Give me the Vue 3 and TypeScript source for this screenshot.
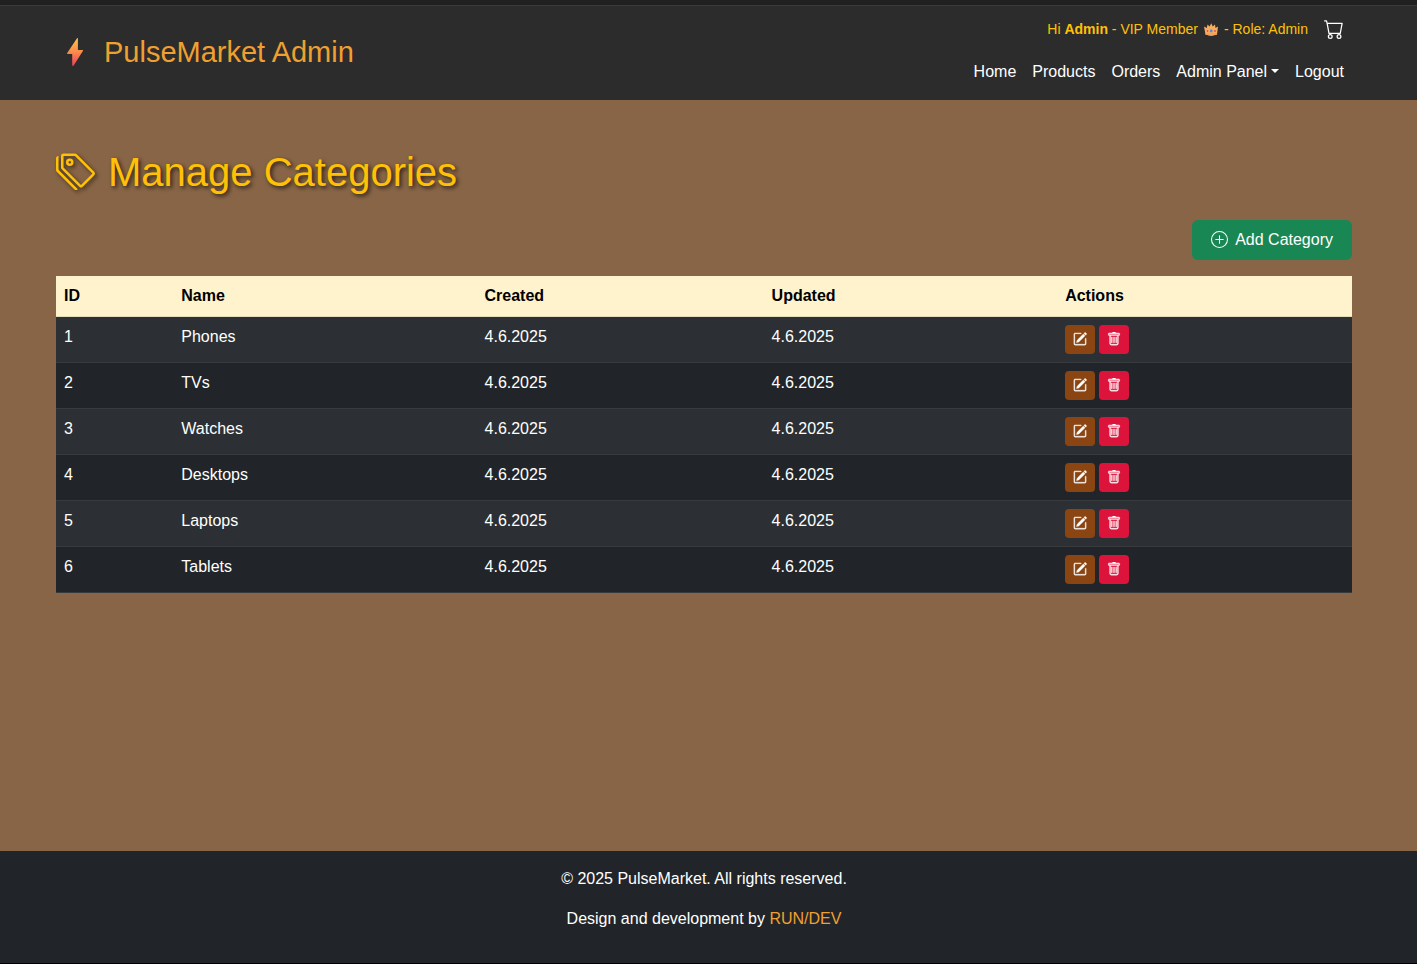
<script setup lang="ts">
interface Category {
  id: number
  name: string
  created: string
  updated: string
}

const names: string[] = ['Phones', 'TVs', 'Watches', 'Desktops', 'Laptops', 'Tablets']

const categories: Category[] = names.map((name, index) => ({
  id: index + 1,
  name,
  created: '4.6.2025',
  updated: '4.6.2025',
}))
</script>

<template>
  <div class="page">
    <header class="header">
      <div class="container header-row">
        <a class="brand" href="#">
          <svg class="bolt" viewBox="0 0 16 28" aria-hidden="true">
            <defs>
              <linearGradient id="bolt-fill" x1="0" y1="0" x2="0" y2="1">
                <stop offset="0" stop-color="#ffc24a" />
                <stop offset="0.5" stop-color="#fb8a4c" />
                <stop offset="1" stop-color="#e8405c" />
              </linearGradient>
            </defs>
            <path d="M10 0.3Q10.9-.4 10.9.8V12h4.6q.9.1.4 1L6.700 27.500Q5.200 28.600 5.200 27V16H.6Q-.3 15.800.2 15Z" fill="url(#bolt-fill)" />
          </svg>
          <span>PulseMarket Admin</span>
        </a>
        <div class="header-side">
          <div class="account">
            <span class="greeting">
              <span>Hi <strong>Admin</strong> - VIP Member</span>
              <svg class="crown" viewBox="0 0 14 13" aria-hidden="true">
                <path d="M0 3.500 2.800 5 3.500 1.500 5.600 3.500 7.200.3 8.800 3.500 11 1.500 11.500 5 14 3.500 13 11.500Q7 13.800 1.500 11.500Z" fill="#f8ad5d" />
                <path d="M1.500 9.500Q7 11.500 13 9.500L13 11.500Q7 13.800 1.500 11.500Z" fill="#f5a05a" />
                <circle cx="7.200" cy="8" r="1.400" fill="#4a8bea" />
                <circle cx="3.500" cy="8" r="0.900" fill="#e9475d" />
                <circle cx="11" cy="8" r="0.900" fill="#e9475d" />
              </svg>
              <span>- Role: Admin</span>
            </span>
            <a class="cart" href="#" aria-label="Cart">
              <svg viewBox="0 0 16 16" aria-hidden="true">
                <path d="M0 1.500A.5.5 0 0 1 .5 1H2a.5.5 0 0 1 .485.379L2.890 3H14.500a.5.5 0 0 1 .491.592l-1.500 8A.5.5 0 0 1 13 12H4a.5.5 0 0 1-.491-.408L2.010 3.607 1.610 2H.5a.5.5 0 0 1-.5-.5M3.102 4l1.313 7h8.170l1.313-7zM5 12a2 2 0 1 0 0 4 2 2 0 0 0 0-4m7 0a2 2 0 1 0 0 4 2 2 0 0 0 0-4m-7 1a1 1 0 1 1 0 2 1 1 0 0 1 0-2m7 0a1 1 0 1 1 0 2 1 1 0 0 1 0-2" />
              </svg>
            </a>
          </div>
          <nav class="nav">
            <a href="#">Home</a>
            <a href="#">Products</a>
            <a href="#">Orders</a>
            <a class="dropdown" href="#">Admin Panel</a>
            <a href="#">Logout</a>
          </nav>
        </div>
      </div>
    </header>

    <main class="main">
      <div class="container">
        <h1 class="title">
          <svg class="tags" viewBox="0 0 16 16" aria-hidden="true">
            <path d="M3 2v4.586l7 7L14.586 9l-7-7zM2 2a1 1 0 0 1 1-1h4.586a1 1 0 0 1 .707.293l7 7a1 1 0 0 1 0 1.414l-4.586 4.586a1 1 0 0 1-1.414 0l-7-7A1 1 0 0 1 2 6.586z" />
            <path d="M5.500 5a.5.5 0 1 1 0-1 .5.5 0 0 1 0 1m0 1a1.500 1.500 0 1 0 0-3 1.500 1.500 0 0 0 0 3M1 7.086a1 1 0 0 0 .293.707L8.750 15.250l-.043.043a1 1 0 0 1-1.414 0l-7-7A1 1 0 0 1 0 7.586V3a1 1 0 0 1 1-1z" />
          </svg>
          <span>Manage Categories</span>
        </h1>
        <div class="toolbar">
          <button class="add" type="button">
            <svg viewBox="0 0 16 16" aria-hidden="true">
              <path d="M8 15A7 7 0 1 1 8 1a7 7 0 0 1 0 14m0 1A8 8 0 1 0 8 0a8 8 0 0 0 0 16" />
              <path d="M8 4a.5.5 0 0 1 .5.5v3h3a.5.5 0 0 1 0 1h-3v3a.5.5 0 0 1-1 0v-3h-3a.5.5 0 0 1 0-1h3v-3A.5.5 0 0 1 8 4" />
            </svg>
            <span>Add Category</span>
          </button>
        </div>
        <table class="table">
          <thead>
            <tr>
              <th class="col-id" scope="col">ID</th>
              <th class="col-name" scope="col">Name</th>
              <th class="col-created" scope="col">Created</th>
              <th class="col-updated" scope="col">Updated</th>
              <th scope="col">Actions</th>
            </tr>
          </thead>
          <tbody>
            <tr v-for="category in categories" :key="category.id">
              <td>{{ category.id }}</td>
              <td>{{ category.name }}</td>
              <td>{{ category.created }}</td>
              <td>{{ category.updated }}</td>
              <td>
                <div class="actions">
                  <button class="action edit" type="button" :aria-label="`Edit ${category.name}`">
                    <svg viewBox="0 0 16 16" aria-hidden="true">
                      <path d="M15.502 1.940a.5.5 0 0 1 0 .706L14.459 3.690l-2-2L13.502.646a.5.5 0 0 1 .707 0l1.293 1.293zm-1.750 2.456-2-2L4.939 9.210a.5.5 0 0 0-.121.196l-.805 2.414a.25.25 0 0 0 .316.316l2.414-.805a.5.5 0 0 0 .196-.12z" />
                      <path fill-rule="evenodd" d="M1 13.500A1.500 1.500 0 0 0 2.500 15h11a1.500 1.500 0 0 0 1.500-1.500v-6a.5.5 0 0 0-1 0v6a.5.5 0 0 1-.5.5h-11a.5.5 0 0 1-.5-.5v-11a.5.5 0 0 1 .5-.5H9a.5.5 0 0 0 0-1H2.500A1.500 1.500 0 0 0 1 2.500z" />
                    </svg>
                  </button>
                  <button class="action delete" type="button" :aria-label="`Delete ${category.name}`">
                    <svg viewBox="0 0 16 16" aria-hidden="true">
                      <path d="M5.500 5.500A.5.5 0 0 1 6 6v6a.5.5 0 0 1-1 0V6a.5.5 0 0 1 .5-.5m2.500 0a.5.5 0 0 1 .5.5v6a.5.5 0 0 1-1 0V6a.5.5 0 0 1 .5-.5m3 .5a.5.5 0 0 0-1 0v6a.5.5 0 0 0 1 0z" />
                      <path d="M14.500 3a1 1 0 0 1-1 1H13v9a2 2 0 0 1-2 2H5a2 2 0 0 1-2-2V4h-.5a1 1 0 0 1-1-1V2a1 1 0 0 1 1-1H6a1 1 0 0 1 1-1h2a1 1 0 0 1 1 1h3.500a1 1 0 0 1 1 1zM4.118 4 4 4.059V13a1 1 0 0 0 1 1h6a1 1 0 0 0 1-1V4.059L11.882 4zM2.500 3h11V2h-11z" />
                    </svg>
                  </button>
                </div>
              </td>
            </tr>
          </tbody>
        </table>
      </div>
    </main>

    <footer class="footer">
      <p>© 2025 PulseMarket. All rights reserved.</p>
      <p>Design and development by <a href="#">RUN/DEV</a></p>
    </footer>
  </div>
</template>

<style>
body {
  margin: 0;
}
</style>

<style scoped>
.page {
  display: flex;
  flex-direction: column;
  min-height: 100vh;
  box-sizing: border-box;
  border-bottom: 1px solid #000;
  background: #886546;
  color: #fff;
  font-family: "Liberation Sans", Arial, sans-serif;
  font-size: 16px;
  line-height: 24px;
}

.page * {
  box-sizing: border-box;
}

.page a {
  color: inherit;
  text-decoration: none;
}

.page svg {
  display: block;
  flex: none;
  fill: currentColor;
}

.container {
  width: 100%;
  max-width: 1296px;
  margin: 0 auto;
}

.header {
  padding-right: 9px;
  border-top: 5px solid #202020;
  background: #2c2c2c;
  box-shadow: inset 0 1px #3b3b3b;
}

.header-row {
  display: flex;
  justify-content: space-between;
  align-items: center;
  padding: 9px 8px 8px;
}

.brand {
  display: flex;
  align-items: center;
  gap: 21px;
  padding: 0 0 2px 3px;
  font-size: 29px;
  line-height: 36px;
}

.page .brand {
  color: #f0a030;
}

.bolt {
  width: 16px;
  height: 28px;
}

.header-side {
  display: flex;
  flex-direction: column;
  align-items: flex-end;
  gap: 8px;
}

.account {
  display: flex;
  align-items: center;
  gap: 16px;
  height: 30px;
}

.greeting {
  display: flex;
  align-items: center;
  gap: 6px;
  color: #ffc107;
  font-size: 14px;
  line-height: 20px;
}

.crown {
  width: 14px;
  height: 13px;
}

.cart svg {
  width: 20px;
  height: 20px;
}

.nav {
  display: flex;
  gap: 16px;
}

.nav a {
  padding: 8px 0;
}

.dropdown::after {
  content: "";
  display: inline-block;
  margin-left: 4px;
  vertical-align: 4px;
  border-top: 4px solid;
  border-right: 4px solid transparent;
  border-left: 4px solid transparent;
}

.main {
  flex: 1;
  padding: 48px 9px 48px 0;
}

.title {
  display: flex;
  align-items: center;
  gap: 12px;
  margin: 0 0 24px;
  color: #ffc107;
  font-size: 40px;
  font-weight: 400;
  line-height: 48px;
  text-shadow: 2px 2px 4px rgba(0, 0, 0, 0.7);
}

.tags {
  width: 40px;
  height: 40px;
  margin-bottom: 2px;
  filter: drop-shadow(2px 2px 2px rgba(0, 0, 0, 0.6));
}

.toolbar {
  display: flex;
  justify-content: flex-end;
  margin-bottom: 16px;
}

.add {
  display: flex;
  align-items: center;
  gap: 7px;
  padding: 8px 19px;
  border: 0;
  border-radius: 6px;
  background: #198754;
  color: #fff;
  font: inherit;
}

.add svg {
  width: 17px;
  height: 17px;
  margin-bottom: 2px;
}

.table {
  width: 100%;
  table-layout: fixed;
  border-collapse: separate;
  border-spacing: 0;
}

.table th,
.table td {
  padding: 8px;
  border-bottom: 1px solid #373b3e;
  text-align: left;
  vertical-align: top;
}

.table th {
  border-color: #e6dbb9;
  background: #fff3cd;
  color: #000;
}

.table td {
  background: #212529;
}

.table tbody tr:nth-child(odd) td {
  background: #2c3034;
}

.col-id {
  width: 9.05%;
}

.col-name {
  width: 23.4%;
}

.col-created {
  width: 22.15%;
}

.col-updated {
  width: 22.65%;
}

.actions {
  display: flex;
  gap: 4px;
}

.action {
  padding: 7px 8px 8px;
  border: 0;
  border-radius: 4px;
  color: #fff;
}

.action svg {
  width: 14px;
  height: 14px;
  stroke: currentColor;
  stroke-width: 0.4;
}

.edit {
  background: #8b4513;
}

.delete {
  background: #dc143c;
}

.footer {
  padding: 16px 9px 16px 0;
  background: #212529;
  text-align: center;
}

.footer p {
  margin: 0 0 16px;
}

.page .footer a {
  color: #f0a030;
}
</style>
